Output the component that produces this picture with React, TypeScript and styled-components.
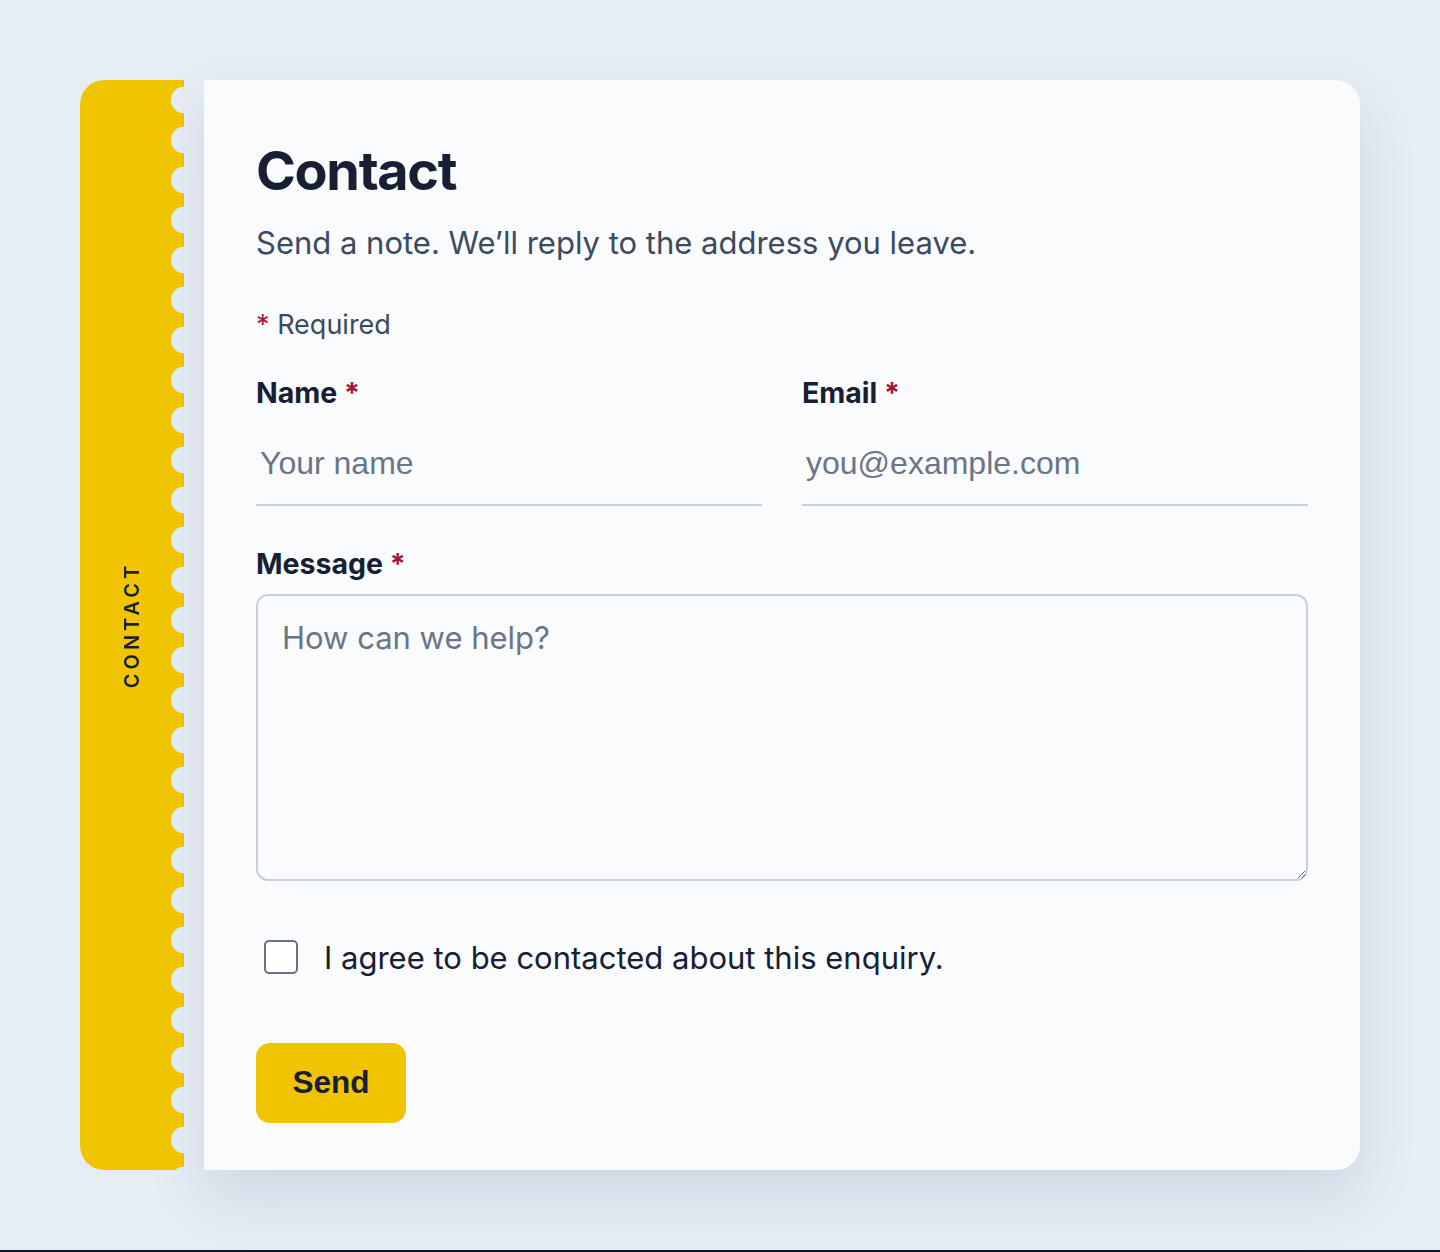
import styled, { createGlobalStyle } from "styled-components";

const GlobalStyle = createGlobalStyle`
  * {
    box-sizing: border-box;
  }
  body {
    margin: 0;
    background: #e6edf5;
    font-family: Inter, "Noto Sans", sans-serif;
    color: #172033;
  }
`;

const App = () => {
  return (
    <>
      <GlobalStyle />
      <Page>
        <Card>
          <Tab>
            <TabLabel>CONTACT</TabLabel>
          </Tab>
          <Panel>
            <Title>Contact</Title>
            <Lead>Send a note. We’ll reply to the address you leave.</Lead>
            <RequiredNote>
              <Star>*</Star> Required
            </RequiredNote>
            <Form onSubmit={(e) => e.preventDefault()}>
              <Row>
                <Field>
                  <Label htmlFor="name">
                    Name <Star>*</Star>
                  </Label>
                  <LineInput id="name" type="text" placeholder="Your name" />
                </Field>
                <Field>
                  <Label htmlFor="email">
                    Email <Star>*</Star>
                  </Label>
                  <LineInput
                    id="email"
                    type="email"
                    placeholder="you@example.com"
                  />
                </Field>
              </Row>
              <Field>
                <Label htmlFor="message">
                  Message <Star>*</Star>
                </Label>
                <MessageBox id="message" placeholder="How can we help?" />
              </Field>
              <ConsentRow>
                <Checkbox type="checkbox" />
                <span>I agree to be contacted about this enquiry.</span>
              </ConsentRow>
              <SendButton type="submit">Send</SendButton>
            </Form>
          </Panel>
        </Card>
      </Page>
    </>
  );
};

export default App;

const Page = styled.div`
  height: 1252px;
  padding: 80px 80px 0;
  border-bottom: 2px solid #111827;
`;

const Card = styled.div`
  display: flex;
  gap: 20px;
  height: 1090px;
`;

// yellow strip with a punched, stamp-like right edge
const Tab = styled.div`
  width: 104px;
  flex-shrink: 0;
  background: #f0c400;
  border-radius: 24px 0 0 24px;
  -webkit-mask: radial-gradient(circle at 100% 50%, transparent 13px, #000 13.5px)
    0 0 / 100% 40px repeat-y;
  mask: radial-gradient(circle at 100% 50%, transparent 13px, #000 13.5px) 0 0 /
    100% 40px repeat-y;
  display: flex;
  align-items: center;
  justify-content: center;
`;

const TabLabel = styled.span`
  transform: rotate(-90deg);
  font-family: Inter, "Noto Sans", sans-serif;
  font-size: 20px;
  font-weight: 600;
  letter-spacing: 0.2em;
  color: #172033;
  white-space: nowrap;
`;

const Panel = styled.div`
  flex: 1;
  background: #f9fbfd;
  border-radius: 0 24px 24px 0;
  box-shadow: 0 26px 60px rgba(30, 55, 95, 0.12);
  padding: 61px 52px 48px 52px;
`;

const Title = styled.h1`
  margin: 0;
  font-size: 54px;
  line-height: 1.1;
  font-weight: 700;
  letter-spacing: -0.025em;
  color: #172033;
`;

const Lead = styled.p`
  margin: 21px 0 0;
  font-size: 31px;
  line-height: 1.4;
  color: #3b4a60;
`;

const RequiredNote = styled.p`
  margin: 41px 0 0;
  font-size: 27px;
  line-height: 1.4;
  color: #3b4a60;
`;

const Star = styled.span`
  color: #a0173a;
`;

const Form = styled.form`
  display: flex;
  flex-direction: column;
  align-items: flex-start;
  margin-top: 30px;
`;

const Row = styled.div`
  display: grid;
  grid-template-columns: 1fr 1fr;
  gap: 40px;
  width: 100%;
  margin-bottom: 39px;
`;

const Field = styled.div`
  display: flex;
  flex-direction: column;
  gap: 12px;
  width: 100%;
`;

const Label = styled.label`
  font-size: 28.5px;
  font-weight: 700;
  line-height: 1.3;
  color: #172033;
`;

const LineInput = styled.input`
  width: 100%;
  border: none;
  border-bottom: 2px solid #c6d0dc;
  background: transparent;
  padding: 22px 4px 22px;
  font-family: "Liberation Sans", Arial, sans-serif;
  font-size: 32px;
  color: #172033;
  outline: none;

  &::placeholder {
    color: #6b7586;
  }
`;

const MessageBox = styled.textarea`
  width: 100%;
  height: 287px;
  border: 2px solid #c6d0dc;
  border-radius: 12px;
  background: transparent;
  padding: 23px 24px;
  font-family: Inter, "Noto Sans", sans-serif;
  font-size: 31px;
  color: #172033;
  outline: none;

  &::placeholder {
    color: #6b7586;
  }
`;

const ConsentRow = styled.label`
  display: flex;
  align-items: center;
  gap: 26px;
  margin: 58px 0 0 8px;
  font-size: 31px;
  color: #172033;
`;

const Checkbox = styled.input`
  appearance: none;
  margin: 0;
  width: 34px;
  height: 34px;
  border: 2px solid #6b7280;
  border-radius: 5px;
  background: #fff;
`;

const SendButton = styled.button`
  margin-top: 67px;
  width: 150px;
  height: 80px;
  border: none;
  border-radius: 14px;
  background: #f0c400;
  font-family: "Liberation Sans", Arial, sans-serif;
  font-size: 31.5px;
  font-weight: 700;
  color: #172033;
  cursor: pointer;
`;
